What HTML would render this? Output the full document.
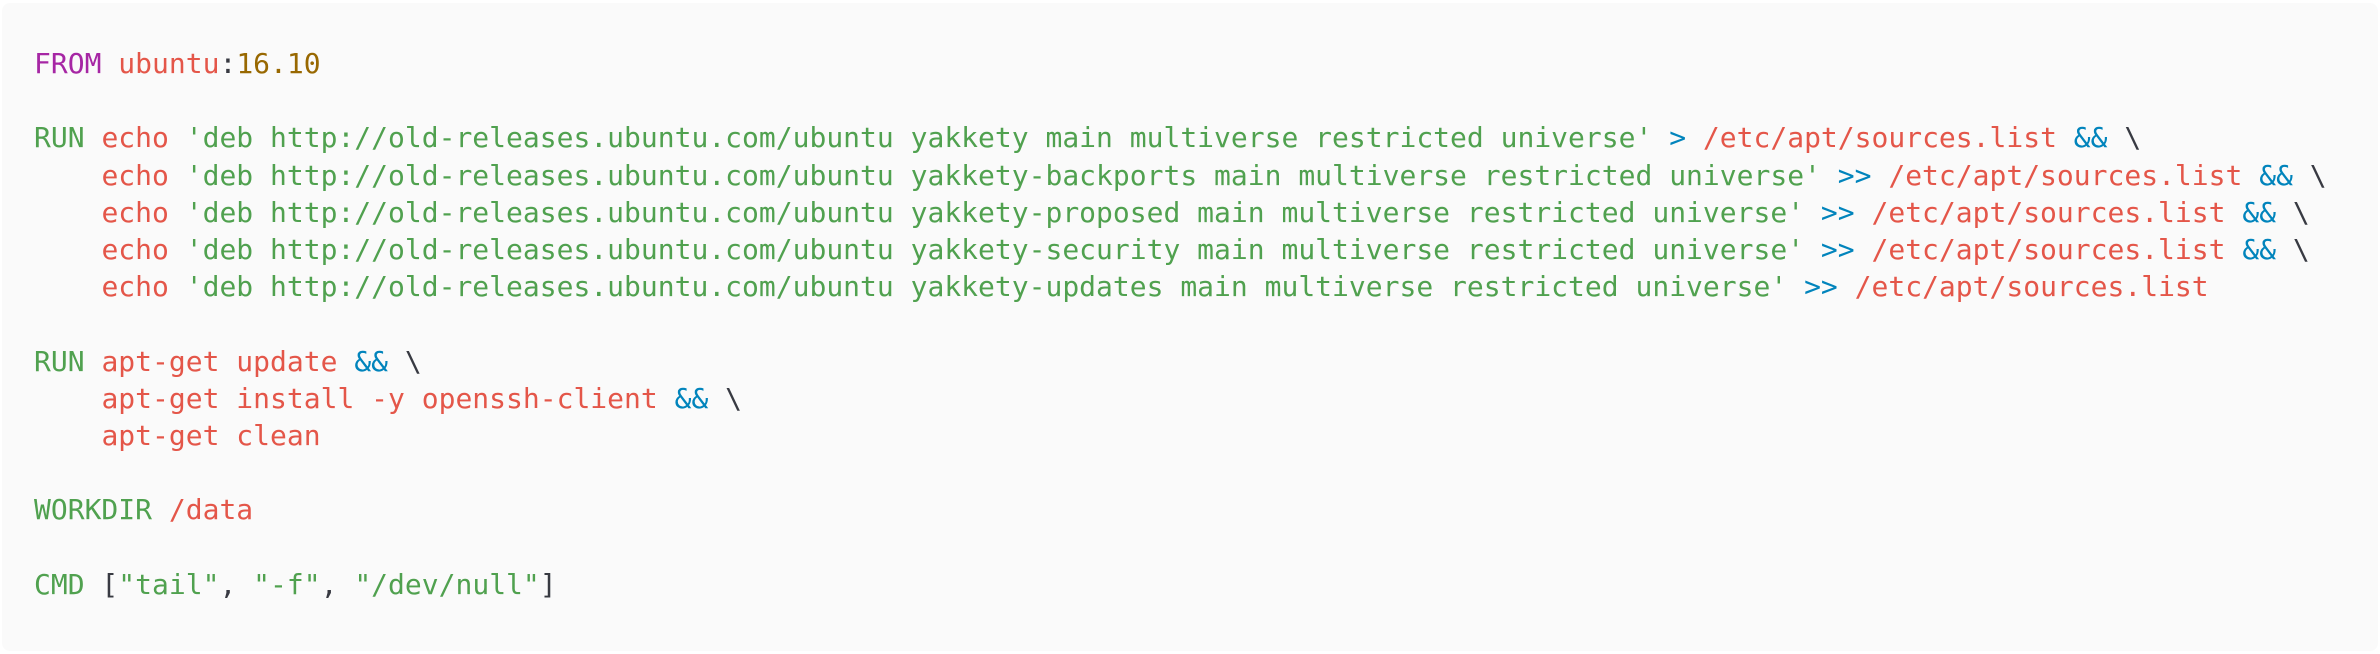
<!DOCTYPE html>
<html><head><meta charset="utf-8"><style>
html,body{margin:0;padding:0;background:#fff;width:2380px;height:654px;overflow:hidden}
.box{position:absolute;left:2px;top:3px;width:2376px;height:648px;background:#fafafa;border-radius:8px;box-sizing:border-box}
pre{margin:0;position:absolute;left:32px;top:42px;font-family:"DejaVu Sans Mono","Liberation Mono",monospace;font-size:28px;line-height:37.2px;color:#383a42}
.k{color:#a626a4}.r{color:#e45649}.n{color:#986801}.g{color:#50a14f}.b{color:#0184bc}
</style></head><body><div class="box"><pre><span class="k">FROM</span> <span class="r">ubuntu</span>:<span class="n">16.10</span>

<span class="g">RUN</span> <span class="r">echo</span> <span class="g">'deb http://old-releases.ubuntu.com/ubuntu yakkety main multiverse restricted universe'</span> <span class="b">&gt;</span> <span class="r">/etc/apt/sources.list</span> <span class="b">&amp;&amp;</span> \
    <span class="r">echo</span> <span class="g">'deb http://old-releases.ubuntu.com/ubuntu yakkety-backports main multiverse restricted universe'</span> <span class="b">&gt;&gt;</span> <span class="r">/etc/apt/sources.list</span> <span class="b">&amp;&amp;</span> \
    <span class="r">echo</span> <span class="g">'deb http://old-releases.ubuntu.com/ubuntu yakkety-proposed main multiverse restricted universe'</span> <span class="b">&gt;&gt;</span> <span class="r">/etc/apt/sources.list</span> <span class="b">&amp;&amp;</span> \
    <span class="r">echo</span> <span class="g">'deb http://old-releases.ubuntu.com/ubuntu yakkety-security main multiverse restricted universe'</span> <span class="b">&gt;&gt;</span> <span class="r">/etc/apt/sources.list</span> <span class="b">&amp;&amp;</span> \
    <span class="r">echo</span> <span class="g">'deb http://old-releases.ubuntu.com/ubuntu yakkety-updates main multiverse restricted universe'</span> <span class="b">&gt;&gt;</span> <span class="r">/etc/apt/sources.list</span>

<span class="g">RUN</span> <span class="r">apt-get update</span> <span class="b">&amp;&amp;</span> \
    <span class="r">apt-get install -y openssh-client</span> <span class="b">&amp;&amp;</span> \
    <span class="r">apt-get clean</span>

<span class="g">WORKDIR</span> <span class="r">/data</span>

<span class="g">CMD</span> [<span class="g">"tail"</span>, <span class="g">"-f"</span>, <span class="g">"/dev/null"</span>]</pre></div></body></html>
